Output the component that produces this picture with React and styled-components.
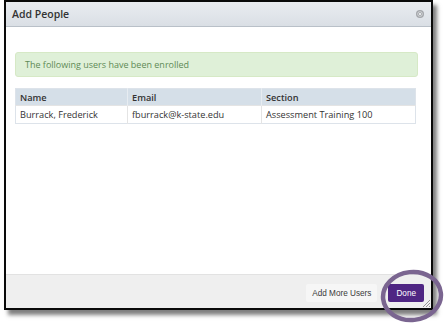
import styled, { createGlobalStyle } from "styled-components";

const GlobalStyle = createGlobalStyle`
  html, body {
    margin: 0;
    padding: 0;
    background: #ffffff;
  }
  body {
    font-family: "Open Sans", "DejaVu Sans", sans-serif;
  }
`;

const rows = [
  {
    name: "Burrack, Frederick",
    email: "fburrack@k-state.edu",
    section: "Assessment Training 100",
  },
];

const App = () => {
  return (
    <>
      <GlobalStyle />
      <StPage>
        <StDialog>
          <StHeader>
            <StTitle>Add People</StTitle>
            <StClose aria-label="close">
              <svg width="8" height="8" viewBox="0 0 8 8">
                <circle cx="4" cy="4" r="4" fill="#a3a6aa" />
                <circle cx="4" cy="4" r="2.4" fill="none" stroke="#d6d8db" strokeWidth="0.8" />
                <path d="M2.8 2.8 L5.2 5.2 M5.2 2.8 L2.8 5.2" stroke="#eceef0" strokeWidth="0.9" />
              </svg>
            </StClose>
          </StHeader>
          <StBody>
            <StAlert>The following users have been enrolled</StAlert>
            <StTable>
              <colgroup>
                <col style={{ width: 112 }} />
                <col style={{ width: 134 }} />
                <col />
              </colgroup>
              <thead>
                <tr>
                  <StTh>Name</StTh>
                  <StTh>Email</StTh>
                  <StTh>Section</StTh>
                </tr>
              </thead>
              <tbody>
                {rows.map((row) => (
                  <tr key={row.email}>
                    <StTd>{row.name}</StTd>
                    <StTd>{row.email}</StTd>
                    <StTd>{row.section}</StTd>
                  </tr>
                ))}
              </tbody>
            </StTable>
          </StBody>
          <StFooter>
            <StButton>Add More Users</StButton>
            <StButton $primary>Done</StButton>
            <StGrip>
              <svg width="8" height="8" viewBox="0 0 8 8">
                <path d="M1 8 L8 1 M4 8 L8 4 M7 8 L8 7" stroke="#8a8a8a" strokeWidth="0.9" />
              </svg>
            </StGrip>
          </StFooter>
          <StMarker>
            <svg width="70" height="58" viewBox="0 0 70 58">
              <ellipse
                cx="35"
                cy="28"
                rx="29"
                ry="24"
                fill="none"
                stroke="#7a6590"
                strokeWidth="4.5"
                transform="rotate(-6 35 28)"
              />
            </svg>
          </StMarker>
        </StDialog>
      </StPage>
    </>
  );
};

const StPage = styled.div`
  width: 445px;
  height: 323px;
  padding: 0 0 0 4px;
  box-sizing: border-box;
  overflow: hidden;
`;

const StDialog = styled.div`
  position: relative;
  width: 429px;
  height: 310px;
  box-sizing: border-box;
  border: 2px solid #0a0a0a;
  display: flex;
  flex-direction: column;
  background: #ffffff;
  box-shadow: 4px 5px 4px rgba(0, 0, 0, 0.5);
`;

const StHeader = styled.div`
  height: 25px;
  box-sizing: border-box;
  display: flex;
  align-items: center;
  justify-content: space-between;
  padding: 0 7px 0 6px;
  background: linear-gradient(#e9ecf0, #dadfe5);
  border-bottom: 1px solid #b9c0c8;
`;

const StTitle = styled.span`
  font-size: 10.5px;
  font-weight: 600;
  color: #333333;
`;

const StClose = styled.span`
  display: flex;
  width: 8px;
  height: 8px;
`;

const StBody = styled.div`
  flex: 1;
  padding: 25px 13px 0 9px;
  display: flex;
  flex-direction: column;
  gap: 11px;
`;

const StAlert = styled.div`
  height: 23px;
  display: flex;
  align-items: center;
  padding: 0 9px;
  background: #dff0d8;
  border: 1px solid #d6e9c6;
  border-radius: 3px;
  color: #5e8a55;
  font-size: 9px;
`;

const StTable = styled.table`
  width: 401px;
  table-layout: fixed;
  border-collapse: collapse;
  border: 1px solid #dde3ea;
  font-size: 9.2px;
  color: #333333;
`;

const StTh = styled.th`
  height: 16px;
  padding: 0 4px;
  text-align: left;
  font-weight: 600;
  background: #d5dfe8;
  border-left: 1px solid #e7ecf1;
  &:first-child {
    border-left: none;
  }
`;

const StTd = styled.td`
  height: 17px;
  padding: 0 4px;
  border-left: 1px solid #e4e4e4;
  border-top: 1px solid #e4e4e4;
  &:first-child {
    border-left: none;
  }
`;

const StFooter = styled.div`
  position: relative;
  height: 34px;
  box-sizing: border-box;
  display: flex;
  align-items: center;
  justify-content: flex-end;
  gap: 11px;
  padding: 3px 7px 0 0;
  background: #efefef;
  border-top: 1px solid #e2e2e2;
`;

const StButton = styled.button`
  font-family: "Liberation Sans", Arial, sans-serif;
  font-size: 8.2px;
  height: 18px;
  padding: 0 ${(props) => (props.$primary ? "8px" : "6px")};
  border: none;
  border-radius: 2px;
  color: ${(props) => (props.$primary ? "#ffffff" : "#3a3a3a")};
  background: ${(props) => (props.$primary ? "#4f2683" : "#f6f6f6")};
  cursor: pointer;
`;

const StGrip = styled.span`
  position: absolute;
  right: 1px;
  bottom: 1px;
  display: flex;
`;

const StMarker = styled.div`
  position: absolute;
  left: 371px;
  top: 266px;
  pointer-events: none;
`;

export default App;
